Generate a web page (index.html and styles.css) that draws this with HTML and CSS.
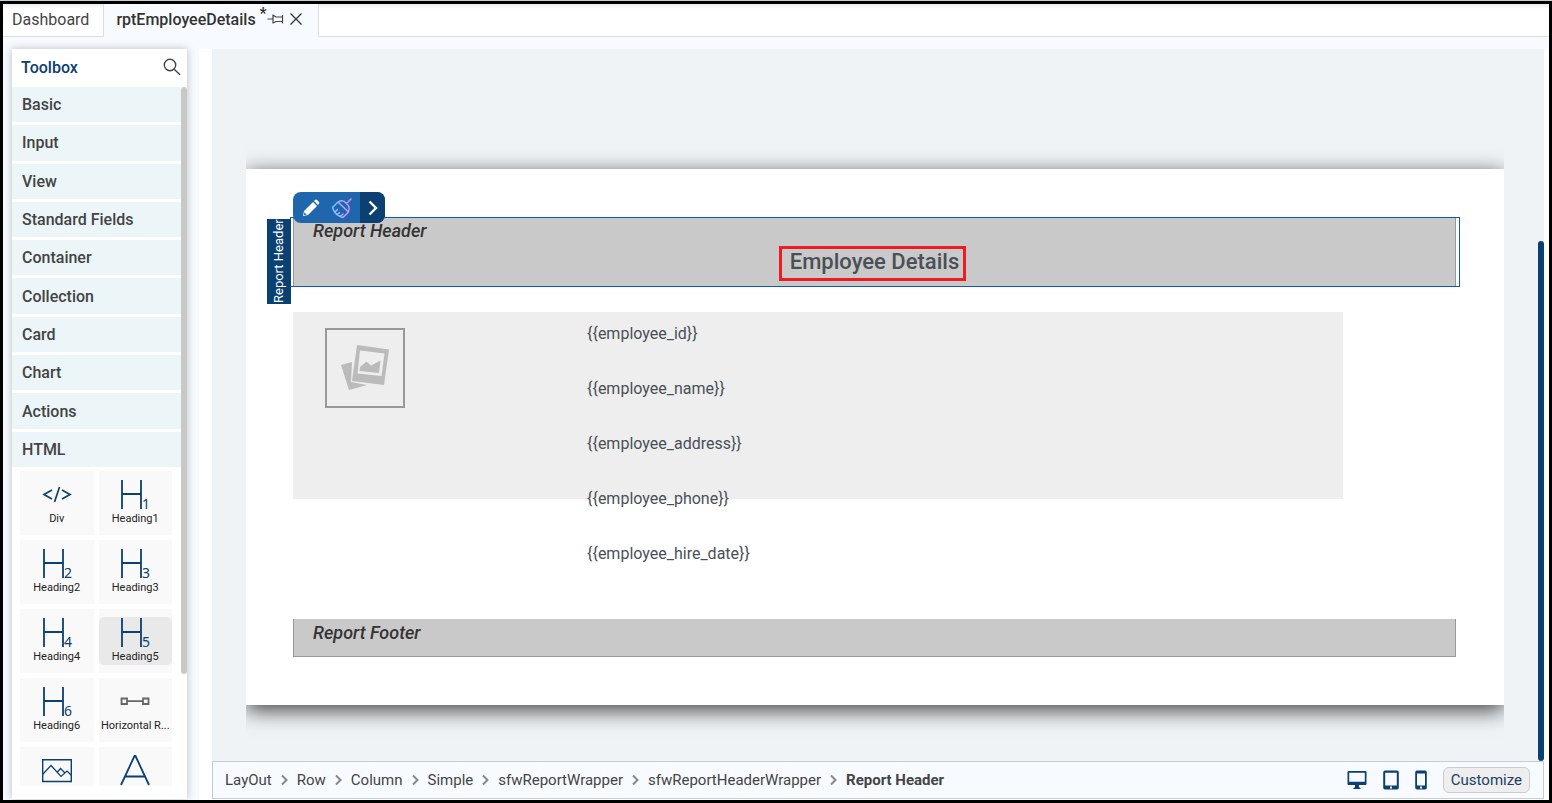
FILE: index.html
```html
<!DOCTYPE html>
<html lang="en">
  <head>
    <meta charset="UTF-8" />
    <meta name="viewport" content="width=device-width, initial-scale=1.0" />
    <title>rptEmployeeDetails</title>
    <link rel="stylesheet" href="styles.css">
  </head>
  <body>
    <div class="app">
      <nav class="tabs">
        <a class="tab" href="#">Dashboard</a>
        <div class="tab active">
          <a href="#">rptEmployeeDetails</a>
          <span class="dirty">*</span>
          <button class="tab-btn" aria-label="Pin tab">
            <svg width="17" height="14" viewBox="0 0 17 14" fill="none" stroke="#444" stroke-width="1.2">
              <path d="M0.5 7H6M6 2.5V11.5M6 3L9 5H15.500M15.500 9.500H9L6 11M15.500 3V11.500" />
            </svg>
          </button>
          <button class="tab-btn close" aria-label="Close tab">
            <svg width="12" height="12" viewBox="0 0 12 12" stroke="#333" stroke-width="1.3">
              <path d="M0.5 0.5L11.5 11.5M11.5 0.5L0.5 11.5" />
            </svg>
          </button>
        </div>
        <div class="tab-rest"></div>
      </nav>

      <div class="workspace">
        <aside class="toolbox">
          <header class="toolbox-head">
            <h2>Toolbox</h2>
            <button class="search-btn" aria-label="Search toolbox">
              <svg width="18" height="18" viewBox="0 0 18 18" fill="none" stroke="#444" stroke-width="1.4">
                <circle cx="7" cy="7" r="5.700" />
                <path d="M11.200 11.200L17 16.800" />
              </svg>
            </button>
          </header>
          <div class="toolbox-body">
            <div class="toolbox-list">
              <div class="categories">
                <button>Basic</button>
                <button>Input</button>
                <button>View</button>
                <button>Standard Fields</button>
                <button>Container</button>
                <button>Collection</button>
                <button>Card</button>
                <button>Chart</button>
                <button>Actions</button>
                <button>HTML</button>
              </div>
              <div class="tiles">
                <div class="tile">
                  <button>
                    <svg width="30" height="32" viewBox="0 0 30 32" fill="none" stroke="#0b4072" stroke-width="1.700">
                      <path d="M10 11L2 15.500L10 20M20 11L28 15.500L20 20M17.500 8L12.500 23" />
                    </svg>
                    Div
                  </button>
                </div>
                <div class="tile">
                  <button>
                    <svg class="h-icon" width="32" height="32" viewBox="0 0 32 32">
                      <path d="M3 1V30M22 1V30M3 15H22" /><text x="23" y="30">1</text>
                    </svg>
                    Heading1
                  </button>
                </div>
                <div class="tile">
                  <button>
                    <svg class="h-icon" width="32" height="32" viewBox="0 0 32 32">
                      <path d="M3 1V30M22 1V30M3 15H22" /><text x="23" y="30">2</text>
                    </svg>
                    Heading2
                  </button>
                </div>
                <div class="tile">
                  <button>
                    <svg class="h-icon" width="32" height="32" viewBox="0 0 32 32">
                      <path d="M3 1V30M22 1V30M3 15H22" /><text x="23" y="30">3</text>
                    </svg>
                    Heading3
                  </button>
                </div>
                <div class="tile">
                  <button>
                    <svg class="h-icon" width="32" height="32" viewBox="0 0 32 32">
                      <path d="M3 1V30M22 1V30M3 15H22" /><text x="23" y="30">4</text>
                    </svg>
                    Heading4
                  </button>
                </div>
                <div class="tile">
                  <button class="hovered">
                    <svg class="h-icon" width="32" height="32" viewBox="0 0 32 32">
                      <path d="M3 1V30M22 1V30M3 15H22" /><text x="23" y="30">5</text>
                    </svg>
                    Heading5
                  </button>
                </div>
                <div class="tile">
                  <button>
                    <svg class="h-icon" width="32" height="32" viewBox="0 0 32 32">
                      <path d="M3 1V30M22 1V30M3 15H22" /><text x="23" y="30">6</text>
                    </svg>
                    Heading6
                  </button>
                </div>
                <div class="tile">
                  <button>
                    <svg width="30" height="32" viewBox="0 0 30 32" fill="none" stroke="#666" stroke-width="1.800">
                      <path d="M1.500 12.500H7V18H1.500ZM23 12.500H28.500V18H23ZM7 15.200H23" />
                    </svg>
                    Horizontal R...
                  </button>
                </div>
                <div class="tile">
                  <button aria-label="Image">
                    <svg width="30" height="32" viewBox="0 0 30 32" fill="none" stroke="#0b4072" stroke-width="1.400">
                      <path d="M0.700 4.700H29.300V26.500H0.700Z" />
                      <path d="M1 19L9 10.500L19 21.500L25 16L29 20M15 17.500L18.500 13.500L23 18" stroke-width="1.200" />
                    </svg>
                  </button>
                </div>
                <div class="tile">
                  <button aria-label="Label">
                    <svg width="30" height="32" viewBox="0 0 30 32" fill="none" stroke="#0b4072" stroke-width="1.800">
                      <path d="M1 30L14.500 1H15.500L29 30M5.500 21.500H24.500" />
                    </svg>
                  </button>
                </div>
              </div>
            </div>
            <div class="toolbox-scroll"></div>
          </div>
        </aside>

        <main class="designer">
          <div class="canvas">
            <div class="page-area">
              <div class="page">
                <section class="band report-header">
                  <span class="band-title">Report Header</span>
                  <h1><span>Employee Details</span></h1>
                  <div class="band-label">Report Header</div>
                  <div class="band-tools">
                    <button aria-label="Edit">
                      <svg width="18" height="18" viewBox="0 0 18 18" fill="#fff">
                        <path d="M1 17L2 12L11 3L15 7L6 16ZM12 2L13.300 0.800Q14.300 0.200 15.300 1.200L16.800 2.700Q17.800 3.700 17 4.800L16 6Z" />
                        <path d="M2.300 13.200L4.800 15.700L2 16Z" fill="#1f66ad" />
                      </svg>
                    </button>
                    <button aria-label="Clear style">
                      <svg width="22" height="22" viewBox="0 0 22 22" fill="none" stroke="url(#brush)" stroke-width="1.500" stroke-linecap="round" stroke-linejoin="round">
                        <defs>
                          <linearGradient id="brush" x1="0" y1="0" x2="1" y2="0">
                            <stop offset="0" stop-color="#7cc4ff" />
                            <stop offset="1" stop-color="#d98cf5" />
                          </linearGradient>
                        </defs>
                        <path d="M20 2L15.500 6.500M8 4.500Q12 2.500 15.500 6.500Q19.500 10 17.500 14.500M7 5L17.500 15M7 5L1.500 10.500Q4 18.500 12 20.500L17.500 15M4 15L6.500 12.500M6.500 17.500L8.500 15.500M9.500 19.500L12 17" />
                      </svg>
                    </button>
                    <button class="more" aria-label="More">
                      <svg width="10" height="16" viewBox="0 0 10 16" fill="none" stroke="#fff" stroke-width="2.400">
                        <path d="M1.500 1.500L8 8L1.500 14.500" />
                      </svg>
                    </button>
                  </div>
                </section>

                <section class="detail">
                  <div class="photo">
                    <svg width="50" height="48" viewBox="0 0 50 48">
                      <path d="M1 21L12 18L11 38L27 41L9 46Z" fill="#bbb" />
                      <path d="M17 1L49 5.500L44 41L12 37Z" fill="#bbb" />
                      <path d="M20 6.500L44.500 9.500L41.500 32L17.500 29.500Z" fill="#eee" />
                      <path d="M19.500 27L20 23L26.500 17.500L31 21.500L40.500 16.500L39 29Z" fill="#bbb" />
                    </svg>
                  </div>
                  <div class="fields">
                    <span>{{employee_id}}</span>
                    <span>{{employee_name}}</span>
                    <span>{{employee_address}}</span>
                    <span>{{employee_phone}}</span>
                    <span>{{employee_hire_date}}</span>
                  </div>
                </section>

                <section class="band report-footer">
                  <span class="band-title">Report Footer</span>
                </section>
              </div>
            </div>
            <div class="canvas-scroll"></div>
          </div>

          <footer class="statusbar">
            <nav class="crumbs">
              <a href="#">LayOut</a>
              <svg class="sep" viewBox="0 0 8 12"><path d="M1.500 1.500L6 6L1.500 10.500" /></svg>
              <a href="#">Row</a>
              <svg class="sep" viewBox="0 0 8 12"><path d="M1.500 1.500L6 6L1.500 10.500" /></svg>
              <a href="#">Column</a>
              <svg class="sep" viewBox="0 0 8 12"><path d="M1.500 1.500L6 6L1.500 10.500" /></svg>
              <a href="#">Simple</a>
              <svg class="sep" viewBox="0 0 8 12"><path d="M1.500 1.500L6 6L1.500 10.500" /></svg>
              <a href="#">sfwReportWrapper</a>
              <svg class="sep" viewBox="0 0 8 12"><path d="M1.500 1.500L6 6L1.500 10.500" /></svg>
              <a href="#">sfwReportHeaderWrapper</a>
              <svg class="sep" viewBox="0 0 8 12"><path d="M1.500 1.500L6 6L1.500 10.500" /></svg>
              <a class="current" href="#">Report Header</a>
            </nav>
            <div class="devices">
              <button aria-label="Desktop">
                <svg width="20" height="20" viewBox="0 0 20 20" fill="#0b4072" fill-rule="evenodd">
                  <path d="M1.500 1H18.500Q19.500 1 19.500 2V14Q19.500 15 18.500 15H12V17L14 19H6L8 17V15H1.500Q0.500 15 0.500 14V2Q0.500 1 1.500 1ZM2.200 2.700V11.800H17.800V2.700Z" />
                </svg>
              </button>
              <button aria-label="Tablet">
                <svg width="16" height="20" viewBox="0 0 16 20" fill="#0b4072" fill-rule="evenodd">
                  <path d="M2 0.500H14Q15.800 0.500 15.800 2.500V17.500Q15.800 19.500 14 19.500H2Q0.200 19.500 0.200 17.500V2.500Q0.200 0.500 2 0.500ZM2.200 2.800V15.500H13.800V2.800ZM7 16.500V18.500H9V16.500Z" />
                </svg>
              </button>
              <button aria-label="Phone">
                <svg width="12" height="20" viewBox="0 0 12 20" fill="#0b4072" fill-rule="evenodd">
                  <path d="M2 0.500H10Q11.800 0.500 11.800 2.500V17.500Q11.800 19.500 10 19.500H2Q0.200 19.500 0.200 17.500V2.500Q0.200 0.500 2 0.500ZM2 3.500V15.500H10V3.500ZM5 16.500V18.500H7V16.500Z" />
                </svg>
              </button>
              <button class="customize-btn">Customize</button>
            </div>
          </footer>
        </main>
      </div>
    </div>
  </body>
</html>
```
FILE: styles.css
```css
* {
  box-sizing: border-box;
}
body {
  margin: 0;
  padding-top: 1px;
  height: 100vh;
  background-color: #c8d2d0;
  font-family: Roboto, "Liberation Sans", sans-serif;
  font-size: 16px;
  color: #444;
}
a {
  color: inherit;
  text-decoration: none;
}
button {
  font: inherit;
  color: inherit;
  border: none;
  background: none;
  padding: 0;
  cursor: pointer;
}
svg {
  display: block;
  flex: none;
}
.app {
  height: 100%;
  display: flex;
  flex-direction: column;
  border: 3px solid #000;
  background: #f7fbff;
}

/* tabs */
.tabs {
  display: flex;
  height: 33px;
  background: linear-gradient(#eee, #fff 5px);
}
.tab {
  display: flex;
  align-items: center;
  padding: 0 14px 2px 9px;
  border-right: 1px solid #ddd;
  border-bottom: 1px solid #ddd;
}
.tab.active {
  padding: 0 16px 2px 12px;
  font-weight: 500;
  color: #333;
  background: #f7fbff;
  border-bottom-color: #f7fbff;
}
.tab-rest {
  flex: 1;
  border-bottom: 1px solid #ddd;
}
.dirty {
  align-self: flex-start;
  margin-left: 4px;
}
.close {
  margin-left: 6px;
}

/* toolbox */
.workspace {
  flex: 1;
  min-height: 0;
  display: flex;
  padding-top: 12px;
}
.toolbox {
  display: flex;
  flex-direction: column;
  width: 175px;
  margin: 0 12px 1px 9px;
  padding-bottom: 13px;
  background: #fff;
  box-shadow: 0 0 8px rgba(0, 0, 0, 0.25);
}
.toolbox-head {
  display: flex;
  align-items: center;
  justify-content: space-between;
  height: 38px;
  padding: 0 6px 2px 9px;
}
.toolbox-head h2 {
  margin: 0;
  font-size: 16px;
  font-weight: 500;
  color: #0b4072;
}
.toolbox-body {
  flex: 1;
  min-height: 0;
  display: flex;
}
.toolbox-list {
  flex: 1;
  overflow: hidden;
}
.categories {
  display: grid;
  grid-auto-rows: 1fr;
  gap: 3px;
  height: 380px;
}
.categories button {
  padding-left: 10px;
  text-align: left;
  font-weight: 500;
  background: #ecf5f8;
}
.toolbox-scroll {
  width: 6px;
  height: 84%;
  border-radius: 3px;
  background: #c8c8c8;
}
.tiles {
  display: grid;
  grid-template-columns: 1fr 1fr;
  gap: 5px;
  padding: 4px 9px 0 8px;
}
.tile {
  height: 64px;
  padding: 8px 0;
  background: #f9f9f9;
}
.tile button {
  display: flex;
  flex-direction: column;
  align-items: center;
  width: 100%;
  height: 48px;
  border-radius: 5px;
  font-size: 11px;
  line-height: 16px;
  color: #222;
  white-space: nowrap;
}
.tile .hovered {
  background: #e9e9e9;
}
.h-icon {
  overflow: visible;
}
.h-icon path {
  fill: none;
  stroke: #0b4072;
  stroke-width: 1.8;
}
.h-icon text {
  font-family: "Noto Sans", sans-serif;
  font-size: 14px;
  line-height: 14px;
  fill: #0b4072;
}

/* designer */
.designer {
  flex: 1;
  min-width: 0;
  display: flex;
  flex-direction: column;
  padding: 0 5px 1px 13px;
  background: #fff;
}
.canvas {
  flex: 1;
  min-height: 0;
  display: flex;
  background: #eff3f6;
}
.page-area {
  flex: 1;
  padding: 120px 34px 0;
}
.canvas-scroll {
  align-self: flex-end;
  width: 6px;
  height: 73%;
  border-radius: 3px;
  background: #0b4072;
}
.page {
  padding: 48px 48px 48px 47px;
  background: #fff;
  box-shadow: 0 5px 20px rgba(0, 0, 0, 0.74);
  clip-path: inset(-40px 0);
}
.band {
  padding: 1px 19px 11px;
  background: #c9c9c9;
  border: 1px solid #999;
  border-top: none;
}
.band-title {
  display: block;
  font-size: 18px;
  font-style: italic;
  font-weight: 500;
  line-height: 25px;
  color: #333;
}
.report-header {
  position: relative;
  padding-bottom: 5px;
}
.report-header::after {
  content: "";
  position: absolute;
  inset: 0 -5px -1px -4px;
  border: 1px solid #0f57b8;
}
.report-header h1 {
  display: flex;
  justify-content: center;
  margin: 3px 4px 0 0;
  font-size: 22px;
  font-weight: 500;
  line-height: 25px;
  color: #495057;
}
.report-header h1 span {
  padding: 0 4px 4px 8px;
  border: 3px solid #ed1c24;
}
.band-label {
  position: absolute;
  top: 2px;
  left: -27px;
  width: 24px;
  height: 85px;
  z-index: 1;
  writing-mode: vertical-rl;
  transform: rotate(180deg);
  text-align: center;
  font-size: 13px;
  line-height: 24px;
  color: #fff;
  background: #0b4072;
}
.band-tools {
  position: absolute;
  top: -25px;
  left: -1px;
  z-index: 1;
  display: flex;
  height: 31px;
  padding-left: 2px;
  border-radius: 8px;
  overflow: hidden;
  background: #1f66ad;
}
.band-tools button {
  display: flex;
  align-items: center;
  justify-content: center;
  width: 31px;
}
.band-tools .more {
  width: 25px;
  margin-left: 3px;
  background: #0b4072;
}
.detail {
  display: grid;
  grid-template-columns: 28% 1fr;
  width: 90.3%;
  margin: 25px 0 54px;
  background: linear-gradient(#eee, #eee) no-repeat 0 0 / 100% 187px;
}
.photo {
  display: flex;
  align-items: center;
  justify-content: center;
  width: 80px;
  height: 80px;
  margin: 16px 0 0 32px;
  border: 2px solid #999;
}
.fields {
  display: flex;
  flex-direction: column;
  gap: 32px;
  padding-top: 10px;
  line-height: 23px;
  color: #495057;
}

/* status bar */
.statusbar {
  display: flex;
  align-items: center;
  justify-content: space-between;
  height: 38px;
  padding: 0 13px 0 12px;
  border: 1px solid #c8cdd2;
  background: #f7fbff;
}
.crumbs {
  display: flex;
  align-items: center;
  gap: 8px;
  font-size: 15px;
}
.crumbs .current {
  font-weight: 700;
}
.sep {
  width: 9px;
  height: 12px;
  fill: none;
  stroke: #888;
  stroke-width: 2;
}
.devices {
  display: flex;
  align-items: center;
  gap: 16px;
}
.devices .customize-btn {
  height: 26px;
  padding: 0 7px;
  border: 1px solid #ccc;
  border-radius: 6px;
  font-size: 15px;
  color: #1c3d66;
  background: #eee;
}
```
